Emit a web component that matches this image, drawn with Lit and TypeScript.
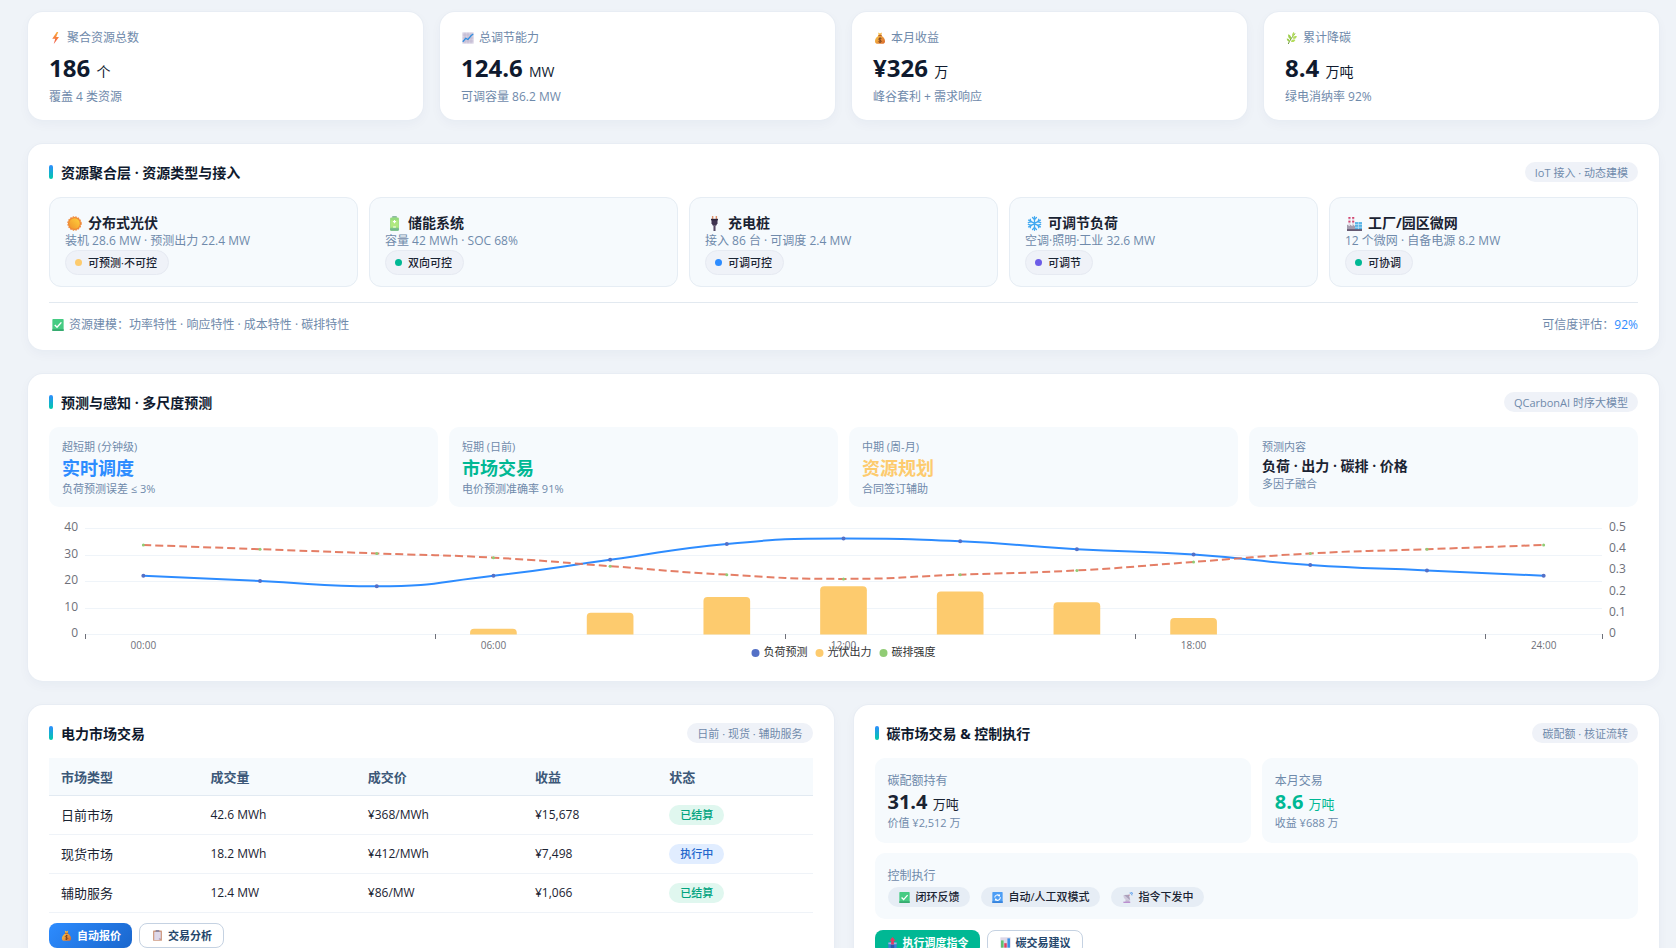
import { LitElement, html, css, svg, nothing, type TemplateResult } from "lit";
import { customElement, property, state } from "lit/decorators.js";
import { classMap } from "lit/directives/class-map.js";

const ICONS: Record<string, TemplateResult> = {
  bolt: svg`<defs><linearGradient id="b" x1="0" y1="0" x2="0" y2="1"><stop offset="0" stop-color="#fbb03b"/><stop offset="1" stop-color="#f04e45"/></linearGradient></defs><path d="M9 0 3 9h4l-2 7 7-9.500H8.200L11 0z" fill="url(#b)"/>`,
  trend: svg`<rect x="0.500" y="0.500" width="15" height="15" fill="#d6d0e2"/><path d="M4 1v14M8 1v14M12 1v14M1 4h14M1 8h14M1 12h14" stroke="#bdb4cf" stroke-width=".8"/><path d="M1 13 5 8.500l3 1.500 4-5 3-2.500" fill="none" stroke="#2f8fe0" stroke-width="1.700"/>`,
  money: svg`<defs><linearGradient id="m" x1="0" y1="0" x2="1" y2="1"><stop offset="0" stop-color="#ffd84d"/><stop offset="1" stop-color="#d9652b"/></linearGradient></defs><path d="M5.500 0.800 8 2l2.500-1.200L9.700 5c3 1.500 5 4.500 5 7.200 0 2.500-1.700 3.600-3.700 3.600H5c-2 0-3.700-1.100-3.700-3.600C1.300 9.500 3.300 6.500 6.300 5z" fill="url(#m)"/><path d="M5.600 4.800h4.800" stroke="#b3541e" stroke-width="1.200"/><path d="M10 8.800C9.500 8 6.300 7.800 6.300 9.500S9.900 10.600 9.900 12.300 6.600 13.800 6 12.700M8 7.200v7.300" fill="none" stroke="#6d3a22" stroke-width="1.100"/>`,
  herb: svg`<path d="M3 16C5 11 8 7 12 2" stroke="#5d8a2a" stroke-width="1.200" fill="none"/><path d="M7 10C3 9 2.500 5 3 3 6 4 7.500 7 7 10zM5 13C2 13 1 10 1 8.500c3 .2 4 2 4 4.500z" fill="#9ccc4a"/><path d="M9 6.500C7 4 9 1 10.500 0c1.500 2.500 1 5-1.500 6.500zM9 8.500c1-3 3.500-3.500 5.500-3-.5 2.500-2.500 4.500-5.500 3zM6.500 12.500c1-3 4.500-3 6-2-1 2.500-3.500 3.500-6 2z" fill="#b3dc5c"/>`,
  sun: svg`<defs><linearGradient id="s" x1="1" y1="0" x2="0" y2="1"><stop offset="0" stop-color="#ffd23c"/><stop offset="1" stop-color="#f0932b"/></linearGradient></defs><circle cx="8" cy="8" r="7" fill="#f08a35" stroke="#ef8a3a" stroke-width="1.400" stroke-dasharray="1.600 1.200"/><circle cx="8" cy="8" r="5.600" fill="url(#s)"/>`,
  battery: svg`<rect x="5.500" y="0" width="5" height="2.500" rx=".6" fill="#8fb8a6"/><rect x="3.300" y="1.600" width="9.400" height="14" rx="1.400" fill="#95db7d"/><path d="M4 4.500h8V12H4z" fill="#b0e87f"/><path d="M3.300 13h9.400v1.300c0 .8-.5 1.300-1.400 1.300H4.700c-.9 0-1.400-.5-1.400-1.300z" fill="#72b98c"/><path d="M8 4.300v3.400M6.300 6h3.400M6.500 11.800h3" stroke="#fff" stroke-width="1.100"/>`,
  plug: svg`<path d="M6 0v4M10 0v4" stroke="#e0936d" stroke-width="1.500"/><path d="M4.800 3.200h6.400v4.500L9.700 10.500H6.300L4.800 7.700z" fill="#3f3350"/><path d="M4.300 3h7.400v1.600H4.300z" fill="#2b2239"/><path d="M8 10.500V16" stroke="#544763" stroke-width="2.200"/>`,
  snow: svg`<g stroke="#43a9f0" stroke-width="1.400" fill="none" stroke-linecap="round"><path d="M8 .8v14.400M1.700 4.400l12.600 7.200M14.300 4.400 1.700 11.600"/><path d="M5.900 1.600 8 3.700l2.100-2.100M5.900 14.400 8 12.300l2.100 2.100M1.400 7.100l2.800-.8-.8-2.800M12.600 12.500l-.8-2.800 2.800-.8M1.400 8.900l2.800.8-.8 2.800M12.600 3.500l-.8 2.800 2.800.8"/></g>`,
  factory: svg`<path d="M1.500 1h2.200v9H1.500zM5.500 1h2.200v9H5.500z" fill="#e6dbe6"/><path d="M1.500 1h2.200v2H1.500zM1.500 5h2.200v2H1.500zM5.500 1h2.200v2H5.500zM5.500 5h2.200v2H5.500z" fill="#d4456f"/><path d="M0 15V9l3 2V9l3 2V9l3 2v4z" fill="#a39cae"/><path d="M8.500 6.500H16V15H8.500z" fill="#56b3e6"/><path d="M8.500 9h7.500M12.200 6.500V15M8.500 12h7.500" stroke="#c2e4f7" stroke-width=".8"/><path d="M0 14h16v2H0z" fill="#655a72"/>`,
  check: svg`<rect x=".5" y="0" width="15" height="16" rx="1" fill="#46cb83"/><path d="M.5 13.500h15V16H.5z" fill="#37ab70"/><path d="m3.700 8 3 3 5.800-6.500" stroke="#fff" stroke-width="1.900" fill="none"/>`,
  clip: svg`<rect x="1.500" y=".8" width="13" height="15" rx="1" fill="#cf9b83"/><path d="M3.300 3h9.400v9.500L10 14.500H3.300z" fill="#ded8ea"/><path d="M12.700 11.500v1L10 14.500v-3z" fill="#b9accc"/><rect x="5.300" y="0" width="5.400" height="3" rx=".6" fill="#928a9f"/>`,
  cycle: svg`<rect x=".5" y="0" width="15" height="16" rx="1" fill="#4d9ef5"/><path d="M.5 13.500h15V16H.5z" fill="#3783dc"/><path d="M4 8a4 4 0 0 1 6.700-2.700M12 7.500A4 4 0 0 1 5.300 11" stroke="#fff" stroke-width="1.500" fill="none"/><path d="m11.800 3-.2 3.700-3.400-.8zM4.200 13l.2-3.600 3.300.8z" fill="#fff"/>`,
  dish: svg`<path d="M6 9h4l1.500 6h-7z" fill="#c4bbd2"/><path d="M2 5c3-2 8 3 9 7-4 1.500-9-2-9-7z" fill="#d0c9dc"/><path d="M3 4.500 12 12 10 4z" fill="#aaa0bb"/><path d="M2 14h10v2H2z" fill="#bb8fd0"/><circle cx="10.500" cy="4.500" r="1" fill="#c9798a"/><path d="M11 1.500a3.500 3.500 0 0 1 3.500 3.500M12 0a4 4 0 0 1 4 3.500" stroke="#63a4ee" stroke-width="1.300" fill="none"/>`,
  outbox: svg`<path d="M2 8h12v8H2z" fill="#3e7edb"/><path d="M2 8h12v2.500H2z" fill="#9db6dd"/><path d="M5.500 11.500h5V16h-5z" fill="#2c59ad"/><path d="m8 0 4.500 5.500H10V11H6V5.500H3.500z" fill="#e23a64"/>`,
  bars: svg`<rect x=".5" y=".5" width="15" height="15" fill="#ddd7e7"/><path d="M1.500 5h3.700v10.500H1.500z" fill="#5cc26d"/><path d="M6.200 9h3.600v6.500H6.200z" fill="#e0405f"/><path d="M10.800 2h3.700v13.500h-3.700z" fill="#3a8ee6"/>`,
};

@customElement("vpp-icon")
export class VppIcon extends LitElement {
  @property() name = "check";
  static styles = css`
    :host { display: inline-flex; width: 12px; height: 12px; flex: none; }
    svg { width: 100%; height: 100%; display: block; }
  `;
  render() {
    return html`<svg viewBox="0 0 16 16" aria-hidden="true">${ICONS[this.name]}</svg>`;
  }
}

const LOAD = [22, 20, 18, 22, 28, 34, 36, 35, 32, 30, 26, 24, 22];
const PV = [0, 0, 0, 2, 8, 14, 18, 16, 12, 6, 0, 0, 0];
const CARBON = [0.42, 0.4, 0.38, 0.36, 0.32, 0.28, 0.26, 0.28, 0.3, 0.34, 0.38, 0.4, 0.42];

type Pt = [number, number];

const clamp = (v: number, a: number, b: number) =>
  Math.max(Math.min(a, b), Math.min(Math.max(a, b), v));

/** Cubic path through the points, with control points kept inside each segment. */
function smoothPath(pts: Pt[], k = 0.5): string {
  let d = `M${pts[0][0]} ${pts[0][1]}`;
  let c0: Pt = pts[0];
  for (let i = 1; i < pts.length; i++) {
    const [x, y] = pts[i];
    const prev = pts[i - 1];
    const next = pts[i + 1];
    let c1: Pt = [x, y];
    let n0: Pt = [x, y];
    if (next) {
      const lp = Math.hypot(x - prev[0], y - prev[1]);
      const ln = Math.hypot(next[0] - x, next[1] - y);
      const r = ln / (ln + lp);
      const vx = next[0] - prev[0];
      const vy = next[1] - prev[1];
      n0 = [clamp(x + vx * k * r, x, next[0]), clamp(y + vy * k * r, y, next[1])];
      c1 = [
        clamp(x - ((n0[0] - x) * lp) / ln, prev[0], x),
        clamp(y - ((n0[1] - y) * lp) / ln, prev[1], y),
      ];
      n0 = [x + ((x - c1[0]) * ln) / lp, y + ((y - c1[1]) * ln) / lp];
    }
    d += `C${c0[0]} ${c0[1]} ${c1[0]} ${c1[1]} ${x} ${y}`;
    c0 = n0;
  }
  return d;
}

@customElement("forecast-chart")
export class ForecastChart extends LitElement {
  @state() private w = 1589;
  private ro?: ResizeObserver;

  static styles = css`
    :host { display: block; height: 141px; margin-top: 12px; overflow: hidden; }
    svg { display: block; width: 100%; height: 100%; }
    .grid { stroke: #eff4f9; }
    .tick { stroke: #6e7079; }
    .axis { font-size: 12px; fill: #6e7079; }
    .hour { font-size: 10px; fill: #6e7079; text-anchor: middle; }
    .end { text-anchor: end; }
    .name { font-size: 11px; fill: #333; }
    .load { fill: none; stroke: #2d8cff; stroke-width: 2; }
    .carbon { fill: none; stroke: #e17055; stroke-width: 2; stroke-dasharray: 8 4; opacity: 0.9; }
    .blue { fill: #5470c6; }
    .amber { fill: #fdcb6e; }
    .green { fill: #91cc75; }
  `;

  connectedCallback() {
    super.connectedCallback();
    this.ro = new ResizeObserver(() => {
      this.w = this.clientWidth || this.w;
    });
    this.ro.observe(this);
  }
  disconnectedCallback() {
    this.ro?.disconnect();
    super.disconnectedCallback();
  }

  render() {
    const left = 36, right = this.w - 36, top = 9, base = 115;
    const step = (right - left) / 13;
    const cx = (i: number) => left + step * (i + 0.5);
    const y = (v: number) => base - (v / 40) * (base - top);
    const y2 = (v: number) => base - (v / 0.5) * (base - top);
    const load = LOAD.map((v, i): Pt => [cx(i), y(v)]);
    const carbon = CARBON.map((v, i): Pt => [cx(i), y2(v)]);
    const bw = step * 0.4;
    const mid = this.w / 2;
    const legend = [
      ["blue", "负荷预测"],
      ["amber", "光伏出力"],
      ["green", "碳排强度"],
    ];
    return html`<svg role="img" aria-label="负荷预测、光伏出力与碳排强度">
      ${[0, 10, 20, 30, 40].map((v) => {
        const gy = Math.round(y(v)) + 0.5;
        return svg`<line class="grid" x1=${left} x2=${right} y1=${gy} y2=${gy}/>
          <text class="axis end" x=${left - 7} y=${y(v) + 3}>${v}</text>`;
      })}
      ${[0, 0.1, 0.2, 0.3, 0.4, 0.5].map(
        (v) => svg`<text class="axis" x=${right + 7} y=${y2(v) + 3}>${v}</text>`
      )}
      ${[0, 3, 6, 9, 12, 13].map((i) => {
        const tx = Math.round(left + step * i) + 0.5;
        return svg`<line class="tick" x1=${tx} x2=${tx} y1=${base} y2=${base + 5}/>`;
      })}
      ${PV.map((v, i) => {
        if (!v) return nothing;
        const x = cx(i) - bw / 2;
        const t = y(v);
        return svg`<path class="amber" d="M${x} ${base + 0.5}V${t + 4}q0-4 4-4h${bw - 8}q4 0 4 4V${base + 0.5}z"/>`;
      })}
      <path class="load" d=${smoothPath(load)} />
      <path class="carbon" d=${smoothPath(carbon)} />
      ${load.map((p) => svg`<circle class="blue" cx=${p[0]} cy=${p[1]} r="2"/>`)}
      ${carbon.map((p) => svg`<circle class="green" cx=${p[0]} cy=${p[1]} r="1.5"/>`)}
      ${[0, 3, 6, 9, 12].map(
        (i) => svg`<text class="hour" x=${cx(i)} y=${base + 15}>${String(i * 2).padStart(2, "0")}:00</text>`
      )}
      ${legend.map(([cls, name], i) => {
        const x = mid - 88 + i * 64;
        return svg`<circle class=${cls} cx=${x} cy=${base + 19} r="4"/>
          <text class="name" x=${x + 8} y=${base + 22}>${name}</text>`;
      })}
    </svg>`;
  }
}

const KPIS = [
  { icon: "bolt", label: "聚合资源总数", value: "186", unit: "个", sub: "覆盖 4 类资源" },
  { icon: "trend", label: "总调节能力", value: "124.6", unit: "MW", sub: "可调容量 86.2 MW" },
  { icon: "money", label: "本月收益", value: "¥326", unit: "万", sub: "峰谷套利 + 需求响应" },
  { icon: "herb", label: "累计降碳", value: "8.4", unit: "万吨", sub: "绿电消纳率 92%" },
];
const RESOURCES = [
  { icon: "sun", name: "分布式光伏", desc: "装机 28.6 MW · 预测出力 22.4 MW", tag: "可预测·不可控", dot: "amber" },
  { icon: "battery", name: "储能系统", desc: "容量 42 MWh · SOC 68%", tag: "双向可控", dot: "green" },
  { icon: "plug", name: "充电桩", desc: "接入 86 台 · 可调度 2.4 MW", tag: "可调可控", dot: "blue" },
  { icon: "snow", name: "可调节负荷", desc: "空调·照明·工业 32.6 MW", tag: "可调节", dot: "purple" },
  { icon: "factory", name: "工厂/园区微网", desc: "12 个微网 · 自备电源 8.2 MW", tag: "可协调", dot: "green" },
];
const SCALES = [
  { label: "超短期 (分钟级)", main: "实时调度", sub: "负荷预测误差 ≤ 3%", tone: "t-blue" },
  { label: "短期 (日前)", main: "市场交易", sub: "电价预测准确率 91%", tone: "t-green" },
  { label: "中期 (周-月)", main: "资源规划", sub: "合同签订辅助", tone: "t-amber" },
  { label: "预测内容", main: "负荷 · 出力 · 碳排 · 价格", sub: "多因子融合", tone: "t-plain" },
];
const TRADES = [
  ["日前市场", "42.6 MWh", "¥368/MWh", "¥15,678", "已结算"],
  ["现货市场", "18.2 MWh", "¥412/MWh", "¥7,498", "执行中"],
  ["辅助服务", "12.4 MW", "¥86/MW", "¥1,066", "已结算"],
];

@customElement("app-root")
export class AppRoot extends LitElement {
  static styles = css`
    :host {
      display: block;
      height: 100vh;
      overflow: hidden auto;
      scrollbar-width: none;
      background: #eff3f8;
      color: #1a2332;
      font-family: "Open Sans", "Noto Sans CJK SC", sans-serif;
      font-size: 12px;
      line-height: 16px;
    }
    * { box-sizing: border-box; }
    h2, h3, p { margin: 0; font-weight: inherit; font-size: inherit; }
    main { display: flex; flex-direction: column; gap: 24px; padding: 12px 17px 24px 28px; }
    .card {
      background: #fff;
      border-radius: 15px;
      box-shadow: 0 0 0 1px #e8edf4, 0 4px 12px rgba(30, 60, 110, 0.04);
    }
    .muted { color: #6f8aab; }
    .kpis { display: grid; grid-template-columns: repeat(4, minmax(0, 1fr)); gap: 17px; }
    .kpi { padding: 18px 21px 15px; }
    .kpi .label { display: flex; align-items: center; gap: 5px; padding-left: 1px; }
    .kpi .value { font-size: 24px; line-height: 32px; font-weight: 700; color: #0f1a2e; margin: 6px 0 5px; }
    .kpi .unit { font-size: 14px; line-height: 1; font-weight: 400; }

    .panel { padding: 18px 21px 17px; }
    .head { display: flex; align-items: center; justify-content: space-between; height: 20px; margin-bottom: 15px; }
    .head h2 {
      display: flex; align-items: center; gap: 8px;
      font-size: 14px; line-height: 20px; font-weight: 700; color: #0f1a2e;
    }
    .head h2::before {
      content: ""; width: 4px; height: 14px; border-radius: 2px;
      background: linear-gradient(#2d8cff, #00cba9);
    }
    .head h2 span { padding-top: 2px; }
    .tag { background: #eff2f8; color: #6f8aab; border-radius: 10px; padding: 3px 10px 1px; font-size: 11px; line-height: 16px; }

    .resources { display: grid; grid-template-columns: repeat(5, minmax(0, 1fr)); gap: 11px; }
    .res { background: #f6fafd; border: 1px solid #e6edf4; border-radius: 12px; padding: 16px 15px 11px; line-height: 18px; }
    .res h3 { display: flex; align-items: center; gap: 6px; padding-left: 2px; font-size: 14px; font-weight: 700; }
    .res vpp-icon { width: 15px; height: 15px; }
    .chip {
      display: flex; width: fit-content; align-items: center; gap: 6px; height: 25px; padding: 0 11px 0 9px;
      border: 1px solid #e6eaf2; border-radius: 13px; background: #eff2f8; font-size: 11px; font-weight: 500;
    }
    .dot { width: 7px; height: 7px; border-radius: 50%; }
    .amber { background: #fdcb6e; }
    .green { background: #00b894; }
    .blue { background: #2d8cff; }
    .purple { background: #6c5ce7; }
    .foot {
      display: flex; justify-content: space-between; margin-top: 15px; padding-top: 14px;
      border-top: 1px solid #e2e9f0;
    }
    .foot span { display: flex; align-items: center; }
    .foot vpp-icon { margin: 0 5px 0 3px; }
    .foot strong { color: #2d8cff; font-weight: 500; }

    .scales { display: grid; grid-template-columns: repeat(4, minmax(0, 1fr)); gap: 11px; }
    .box { background: #f6fafd; border-radius: 10px; padding: 12px 13px 10px; }
    .small { font-size: 11px; line-height: 16px; }
    .scale .main { font-size: 18px; line-height: 26px; font-weight: 700; }
    .scale .t-blue { color: #2d8cff; }
    .scale .t-green { color: #00b894; }
    .scale .t-amber { color: #fdcb6e; }
    .scale .t-plain { font-size: 14px; line-height: 21px; }
    .forecast { padding-bottom: 21px; }

    .pair { display: grid; grid-template-columns: repeat(2, minmax(0, 1fr)); gap: 20px; align-items: start; }
    table { width: 100%; border-collapse: separate; border-spacing: 0; }
    th, td { text-align: left; padding: 0 12px; height: 39px; }
    th { background: #f6fafd; color: #3c5878; font-size: 13px; font-weight: 600; height: 38px; border-bottom: 1px solid #e2eaf2; }
    td { font-size: 12px; border-bottom: 1px solid #eff3f8; }
    td:first-child { font-size: 13px; }
    .status { display: inline-block; padding: 2px 11px; border-radius: 10px; font-size: 11px; line-height: 16px; font-weight: 500; background: #e0f7ef; color: #00a37f; }
    .status.busy { background: #e1edff; color: #2266cc; }
    .actions { display: flex; gap: 7px; margin-top: 11px; }
    table + .actions { margin-top: 10px; }
    button {
      display: inline-flex; align-items: center; gap: 5px; height: 25px; padding: 0 11px 0 12px;
      border: 1px solid #c5d2e2; border-radius: 8px; background: #fff; color: #24466b;
      font: 600 11px/16px "Open Sans", "Noto Sans CJK SC", sans-serif; cursor: pointer;
    }
    button vpp-icon, .mode vpp-icon { width: 11px; height: 11px; }
    button.primary { border: 0; color: #fff; background: linear-gradient(135deg, #2d8cff, #1a66cc); }
    button.go { border: 0; color: #fff; background: #00b894; }

    .carbon { display: grid; grid-template-columns: repeat(2, minmax(0, 1fr)); gap: 10px 11px; }
    .carbon .box { padding: 15px 13px 12px; }
    .carbon .num { font-size: 20px; line-height: 26px; font-weight: 700; }
    .carbon .num span { font-size: 13px; line-height: 1; font-weight: 400; }
    .carbon .num.up { color: #00b894; }
    .carbon .wide { grid-column: 1 / -1; }
    .modes { display: flex; gap: 11px; margin-top: 3px; }
    .mode { display: inline-flex; align-items: center; gap: 6px; height: 20px; padding: 0 10px 0 11px; border-radius: 10px; background: #e6edf5; font-size: 11px; font-weight: 500; }
  `;

  private head(title: string, tag: string) {
    return html`<header class="head"><h2><span>${title}</span></h2><span class="tag">${tag}</span></header>`;
  }

  render() {
    return html`<main>
      <section class="kpis">
        ${KPIS.map(
          (k) => html`<article class="card kpi">
            <p class="label muted"><vpp-icon name=${k.icon}></vpp-icon>${k.label}</p>
            <p class="value">${k.value} <span class="unit">${k.unit}</span></p>
            <p class="muted">${k.sub}</p>
          </article>`
        )}
      </section>

      <section class="card panel">
        ${this.head("资源聚合层 · 资源类型与接入", "IoT 接入 · 动态建模")}
        <div class="resources">
          ${RESOURCES.map(
            (r) => html`<article class="res">
              <h3><vpp-icon name=${r.icon}></vpp-icon>${r.name}</h3>
              <p class="muted">${r.desc}</p>
              <span class="chip"><i class="dot ${r.dot}"></i>${r.tag}</span>
            </article>`
          )}
        </div>
        <footer class="foot muted">
          <span><vpp-icon name="check"></vpp-icon>资源建模：功率特性 · 响应特性 · 成本特性 · 碳排特性</span>
          <span>可信度评估：<strong>92%</strong></span>
        </footer>
      </section>

      <section class="card panel forecast">
        ${this.head("预测与感知 · 多尺度预测", "QCarbonAI 时序大模型")}
        <div class="scales">
          ${SCALES.map(
            (s) => html`<article class="box scale">
              <p class="small muted">${s.label}</p>
              <p class="main ${s.tone}">${s.main}</p>
              <p class="small muted">${s.sub}</p>
            </article>`
          )}
        </div>
        <forecast-chart></forecast-chart>
      </section>

      <div class="pair">
        <section class="card panel">
          ${this.head("电力市场交易", "日前 · 现货 · 辅助服务")}
          <table>
            <thead>
              <tr>${["市场类型", "成交量", "成交价", "收益", "状态"].map((t) => html`<th scope="col">${t}</th>`)}</tr>
            </thead>
            <tbody>
              ${TRADES.map(
                (row) => html`<tr>
                  ${row.slice(0, 4).map((c) => html`<td>${c}</td>`)}
                  <td><span class=${classMap({ status: true, busy: row[4] === "执行中" })}>${row[4]}</span></td>
                </tr>`
              )}
            </tbody>
          </table>
          <div class="actions">
            <button type="button" class="primary"><vpp-icon name="money"></vpp-icon>自动报价</button>
            <button type="button"><vpp-icon name="clip"></vpp-icon>交易分析</button>
          </div>
        </section>

        <section class="card panel">
          ${this.head("碳市场交易 & 控制执行", "碳配额 · 核证流转")}
          <div class="carbon">
            <article class="box">
              <p class="muted">碳配额持有</p>
              <p class="num">31.4 <span>万吨</span></p>
              <p class="small muted">价值 ¥2,512 万</p>
            </article>
            <article class="box">
              <p class="muted">本月交易</p>
              <p class="num up">8.6 <span>万吨</span></p>
              <p class="small muted">收益 ¥688 万</p>
            </article>
            <article class="box wide">
              <p class="muted">控制执行</p>
              <div class="modes">
                <span class="mode"><vpp-icon name="check"></vpp-icon>闭环反馈</span>
                <span class="mode"><vpp-icon name="cycle"></vpp-icon>自动/人工双模式</span>
                <span class="mode"><vpp-icon name="dish"></vpp-icon>指令下发中</span>
              </div>
            </article>
          </div>
          <div class="actions">
            <button type="button" class="go"><vpp-icon name="outbox"></vpp-icon>执行调度指令</button>
            <button type="button"><vpp-icon name="bars"></vpp-icon>碳交易建议</button>
          </div>
        </section>
      </div>
    </main>`;
  }
}
